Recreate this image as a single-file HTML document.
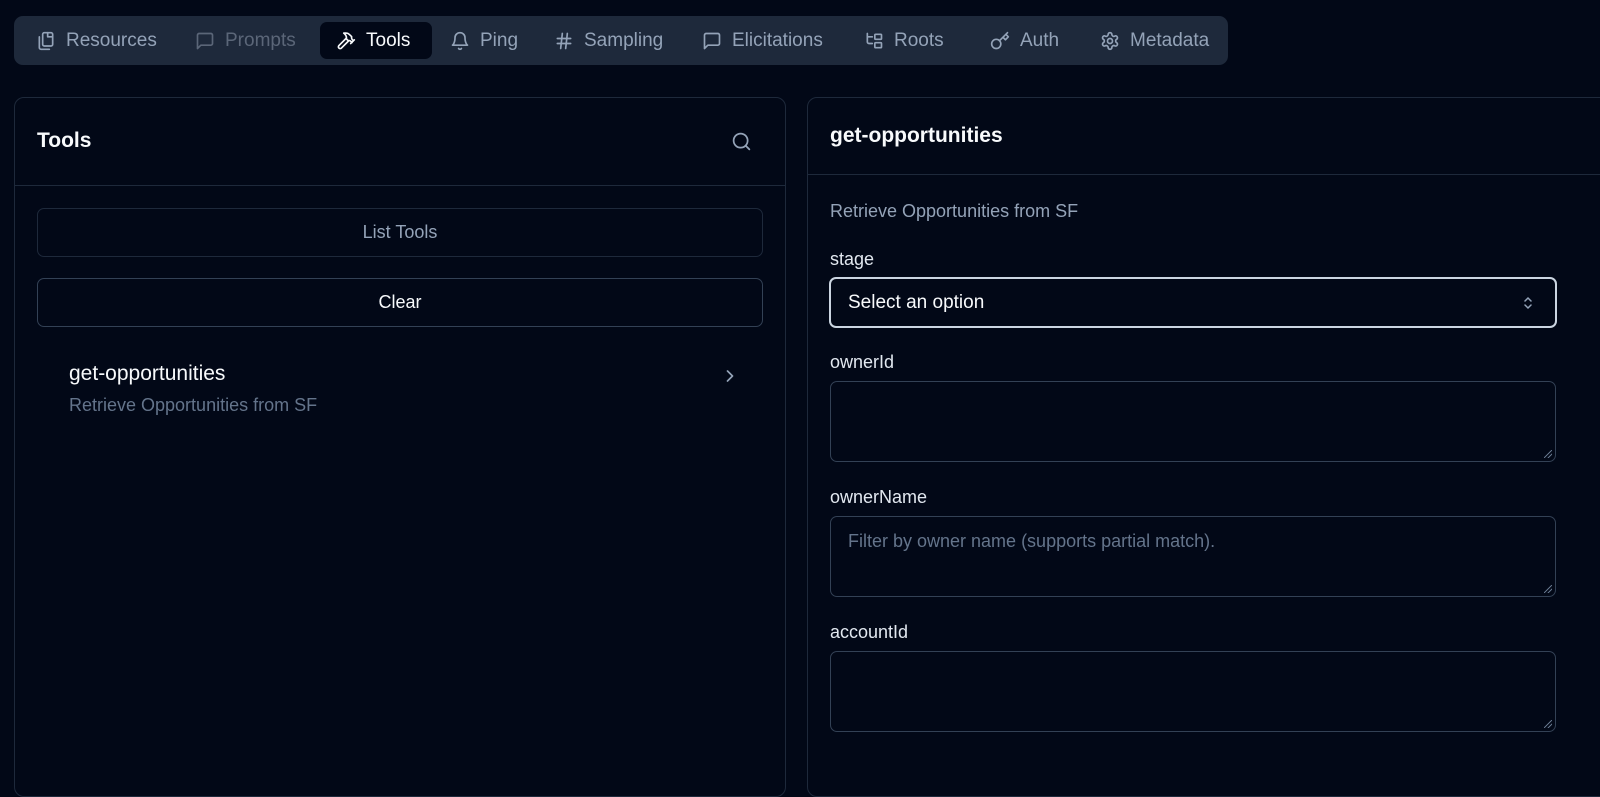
<!DOCTYPE html>
<html><head><meta charset="utf-8"><style>
*{box-sizing:border-box;margin:0;padding:0}
body{width:1600px;height:771px;overflow:hidden;background:#020817;font-family:"Liberation Sans",sans-serif;color:#f8fafc;position:relative}
.nav{position:absolute;left:14px;top:16px;width:1214px;height:49px;background:#1e293b;border-radius:9px}
.tab{position:absolute;top:6px;height:37px;display:flex;align-items:center;font-size:19px;color:#94a3b8;gap:10px;padding:0 14px 0 16px}
.tab svg{width:20px;height:20px;fill:none;stroke:currentColor;stroke-width:2;stroke-linecap:round;stroke-linejoin:round}
.tab.active{background:#020817;color:#f8fafc;border-radius:7px}
.tab.dim{color:#5b6678}
.panel{position:absolute;border:1px solid #1e293b;border-radius:10px;background:#020817}
.abs{position:absolute}
.btn{position:absolute;left:22px;width:726px;height:49px;border:1px solid #1e293b;border-radius:7px;display:flex;align-items:center;justify-content:center;font-size:18px}
.lbl{position:absolute;left:22px;font-size:18px;color:#e2e8f0}
.ta{position:absolute;left:22px;width:726px;height:81px;border:1px solid #334155;border-radius:7px}
.ta:after{content:"";position:absolute;right:3px;bottom:3px;width:8px;height:8px;background:linear-gradient(135deg,transparent 45%,#64748b 45%,#64748b 55%,transparent 55%,transparent 70%,#64748b 70%,#64748b 80%,transparent 80%)}
</style></head><body>
<div class="nav">
 <div class="tab" style="left:6px"><svg viewBox="0 0 24 24"><rect x="8" y="2" width="12" height="16" rx="2"/><path d="M4 7v13a2 2 0 0 0 2 2h10"/><path d="M14 2v5h6"/></svg>Resources</div>
 <div class="tab dim" style="left:165px"><svg viewBox="0 0 24 24"><path d="M21 15a2 2 0 0 1-2 2H7l-4 4V5a2 2 0 0 1 2-2h14a2 2 0 0 1 2 2z"/></svg>Prompts</div>
 <div class="tab active" style="left:306px;width:112px"><svg viewBox="0 0 24 24"><path d="M15 12l-8.5 8.5a2.1 2.1 0 0 1-3-3L12 9"/><path d="M17.6 15L22 10.6M20.9 11.7l-1.3-1.3c-.6-.6-.9-1.3-.9-2.1V6.7L16 4.1A6 6 0 0 0 12 2.5H9.3l.9.8A6.5 6.5 0 0 1 12.5 8v1.5l2 2h1.2c.8 0 1.5.3 2.1.9l1.4 1.4"/></svg>Tools</div>
 <div class="tab" style="left:420px"><svg viewBox="0 0 24 24"><path d="M6 8a6 6 0 0 1 12 0c0 7 3 9 3 9H3s3-2 3-9"/><path d="M10.3 21a1.94 1.94 0 0 0 3.4 0"/></svg>Ping</div>
 <div class="tab" style="left:524px"><svg viewBox="0 0 24 24"><path d="M4 9h16M4 15h16M10 3L8 21M16 3l-2 18"/></svg>Sampling</div>
 <div class="tab" style="left:672px"><svg viewBox="0 0 24 24"><path d="M21 15a2 2 0 0 1-2 2H7l-4 4V5a2 2 0 0 1 2-2h14a2 2 0 0 1 2 2z"/></svg>Elicitations</div>
 <div class="tab" style="left:834px"><svg viewBox="0 0 24 24"><path d="M4 3v10a2 2 0 0 0 2 2h4M4 7h6"/><rect x="13" y="4" width="8" height="6" rx="1"/><rect x="13" y="14" width="8" height="6" rx="1"/></svg>Roots</div>
 <div class="tab" style="left:960px"><svg viewBox="0 0 24 24"><circle cx="7.5" cy="15.5" r="5.5"/><path d="M21 2l-9.6 9.6M15.5 7.5l3 3L22 7l-3-3"/></svg>Auth</div>
 <div class="tab" style="left:1070px"><svg viewBox="0 0 24 24"><path d="M12.2 2h-.4a2 2 0 0 0-2 2v.2a2 2 0 0 1-1 1.7l-.4.3a2 2 0 0 1-2 0l-.2-.1a2 2 0 0 0-2.7.7l-.2.4a2 2 0 0 0 .7 2.7l.2.1a2 2 0 0 1 1 1.7v.5a2 2 0 0 1-1 1.7l-.2.1a2 2 0 0 0-.7 2.7l.2.4a2 2 0 0 0 2.7.7l.2-.1a2 2 0 0 1 2 0l.4.3a2 2 0 0 1 1 1.7v.2a2 2 0 0 0 2 2h.4a2 2 0 0 0 2-2v-.2a2 2 0 0 1 1-1.7l.4-.3a2 2 0 0 1 2 0l.2.1a2 2 0 0 0 2.7-.7l.2-.4a2 2 0 0 0-.7-2.7l-.2-.1a2 2 0 0 1-1-1.7v-.5a2 2 0 0 1 1-1.7l.2-.1a2 2 0 0 0 .7-2.7l-.2-.4a2 2 0 0 0-2.7-.7l-.2.1a2 2 0 0 1-2 0l-.4-.3a2 2 0 0 1-1-1.7V4a2 2 0 0 0-2-2z"/><circle cx="12" cy="12" r="3"/></svg>Metadata</div>
</div>

<div class="panel" style="left:14px;top:97px;width:772px;height:700px">
 <div class="abs" style="left:22px;top:31px;font-size:21px;font-weight:bold">Tools</div>
 <svg class="abs" style="left:716px;top:33px" width="21" height="21" viewBox="0 0 24 24" fill="none" stroke="#94a3b8" stroke-width="2" stroke-linecap="round"><circle cx="11" cy="11" r="8"/><path d="M21 21l-4.3-4.3"/></svg>
 <div class="abs" style="left:0;top:87px;width:770px;height:1px;background:#1e293b"></div>
 <div class="btn" style="top:110px;color:#94a3b8">List Tools</div>
 <div class="btn" style="top:180px;border-color:#334155">Clear</div>
 <div class="abs" style="left:54px;top:264px;font-size:21px">get-opportunities</div>
 <div class="abs" style="left:54px;top:297px;font-size:18px;color:#64748b">Retrieve Opportunities from SF</div>
 <svg class="abs" style="left:705px;top:268px" width="20" height="20" viewBox="0 0 24 24" fill="none" stroke="#94a3b8" stroke-width="2" stroke-linecap="round" stroke-linejoin="round"><path d="M9 18l6-6-6-6"/></svg>
</div>

<div class="panel" style="left:807px;top:97px;width:820px;height:700px">
 <div class="abs" style="left:22px;top:26px;font-size:21px;font-weight:bold">get-opportunities</div>
 <div class="abs" style="left:0;top:76px;width:820px;height:1px;background:#1e293b"></div>
 <div class="abs" style="left:22px;top:103px;font-size:18px;color:#94a3b8">Retrieve Opportunities from SF</div>
 <div class="lbl" style="top:151px">stage</div>
 <div class="abs" style="left:21px;top:179px;width:728px;height:51px;border:2px solid #cbd5e1;border-radius:7px;font-size:19px;display:flex;align-items:center;padding-left:17px">Select an option
  <svg class="abs" style="right:20px;top:15px" width="14" height="18" viewBox="0 0 14 18" fill="none" stroke="#94a3b8" stroke-width="1.5" stroke-linecap="round"><path d="M4 7l3-3 3 3M4 11l3 3 3-3"/></svg></div>
 <div class="lbl" style="top:254px">ownerId</div>
 <div class="ta" style="top:283px"></div>
 <div class="lbl" style="top:389px">ownerName</div>
 <div class="ta" style="top:418px"><div class="abs" style="left:17px;top:14px;font-size:18px;color:#64748b">Filter by owner name (supports partial match).</div></div>
 <div class="lbl" style="top:524px">accountId</div>
 <div class="ta" style="top:553px"></div>
</div>
</body></html>
